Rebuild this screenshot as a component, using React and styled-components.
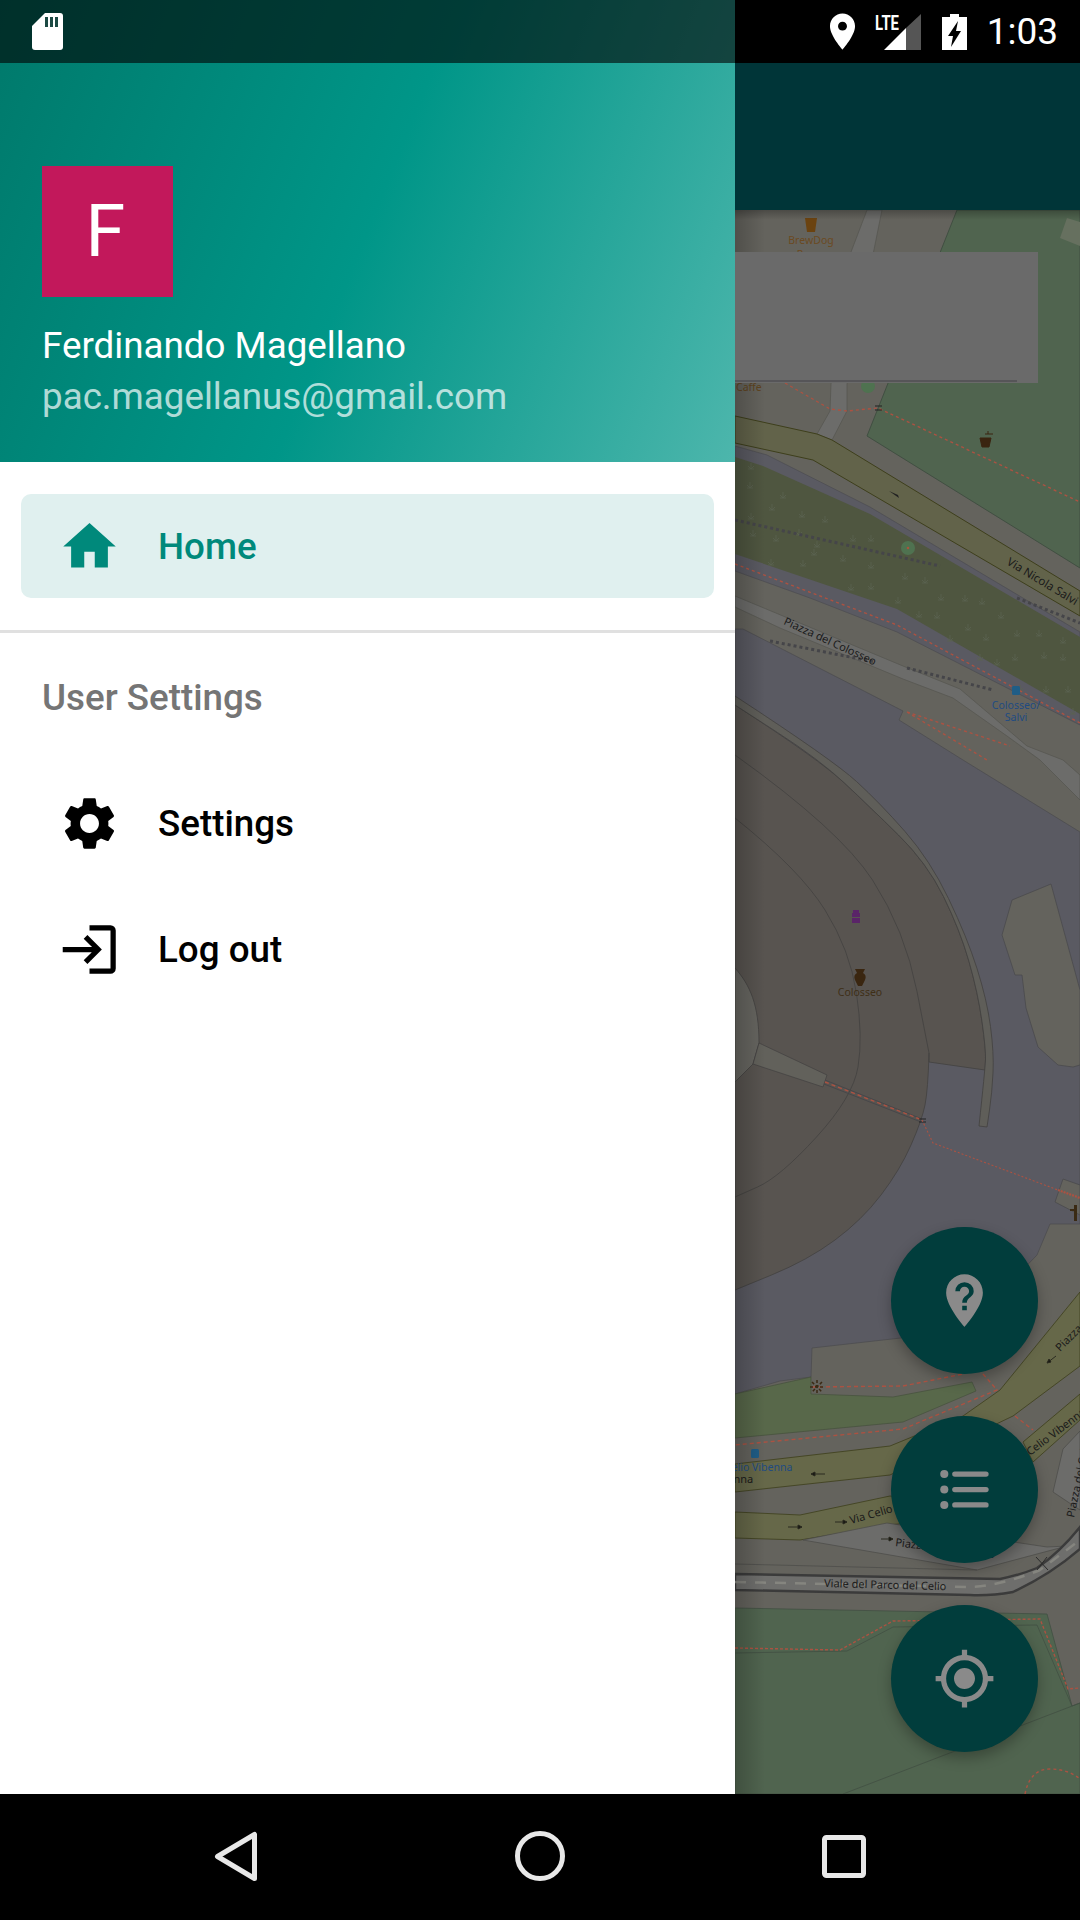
import React from "react";
import styled, { createGlobalStyle } from "styled-components";

const GlobalStyle = createGlobalStyle`
  html, body {
    margin: 0;
    padding: 0;
    background: #000;
    font-family: Roboto, "Liberation Sans", sans-serif;
  }
`;

const Screen = styled.div`
  width: 1080px;
  height: 1920px;
  display: flex;
  flex-direction: column;
  overflow: hidden;
`;

const Body = styled.div`
  flex: 1;
  display: flex;
  min-height: 0;
`;

const Drawer = styled.aside`
  width: 735px;
  flex: none;
  display: flex;
  flex-direction: column;
  background: #fff;
`;

const DrawerTop = styled.div`
  height: 462px;
  display: flex;
  flex-direction: column;
  background: linear-gradient(112deg, #00796b 0%, #009688 50%, #4db6ac 100%);
`;

const DrawerStatus = styled.div`
  height: 63px;
  flex: none;
  padding: 13px 0 0 32px;
  box-sizing: border-box;
  background: rgba(0, 0, 0, 0.6);
`;

const Account = styled.div`
  flex: 1;
  display: flex;
  flex-direction: column;
  padding: 103px 0 0 42px;
`;

const Avatar = styled.div`
  width: 131px;
  height: 131px;
  padding-right: 4px;
  box-sizing: border-box;
  display: flex;
  align-items: center;
  justify-content: center;
  background: #c2185b;
  color: #fff;
  font-size: 72px;
  line-height: 1;
`;

const AccountName = styled.div`
  margin-top: 23px;
  color: #fff;
  font-size: 36.75px;
  line-height: 51px;
`;

const AccountMail = styled.div`
  color: rgba(255, 255, 255, 0.7);
  font-size: 36.75px;
  line-height: 51px;
`;

const Menu = styled.nav`
  flex: 1;
  display: flex;
  flex-direction: column;
  padding-top: 32px;
`;

const MenuRow = styled.div`
  height: ${(p) => (p.$active ? "104px" : "126px")};
  margin: ${(p) => (p.$active ? "0 21px" : "0")};
  padding-left: ${(p) => (p.$active ? "37px" : "58px")};
  box-sizing: border-box;
  display: flex;
  align-items: center;
  gap: 37px;
  border-radius: 10px;
  background: ${(p) => (p.$active ? "#e0f0ef" : "transparent")};
  color: ${(p) => (p.$active ? "#00897b" : "#000")};
  font-size: 36.75px;
  font-weight: 500;
`;

const Divider = styled.div`
  height: 3px;
  margin-top: 32px;
  background: #e0e0e0;
`;

const SectionTitle = styled.div`
  height: 127px;
  padding: 2px 0 0 42px;
  box-sizing: border-box;
  display: flex;
  align-items: center;
  color: #757575;
  font-size: 36.75px;
  font-weight: 500;
`;

const Side = styled.div`
  flex: 1;
  display: flex;
  flex-direction: column;
  min-width: 0;
`;

const SideStatus = styled.div`
  height: 63px;
  flex: none;
  display: flex;
  align-items: center;
  justify-content: flex-end;
  gap: 11px;
  padding-right: 22px;
  background: #000;
  color: #fff;
`;

const StatusBattery = styled.svg`
  margin-left: 10px;
`;

const StatusTime = styled.span`
  margin-left: 9px;
  font-size: 37px;
  line-height: 1;
`;

const Toolbar = styled.div`
  height: 147px;
  flex: none;
  background: #003538;
`;

const MapArea = styled.div`
  flex: 1;
  position: relative;
  overflow: hidden;
  background: #64635d;

  /* drawer and toolbar shadows */
  &::before {
    content: "";
    position: absolute;
    inset: 0 auto 0 0;
    width: 30px;
    background: linear-gradient(90deg, rgba(0, 0, 0, 0.2), rgba(0, 0, 0, 0));
  }
  &::after {
    content: "";
    position: absolute;
    inset: 0 0 auto 0;
    height: 10px;
    background: linear-gradient(180deg, rgba(0, 0, 0, 0.25), rgba(0, 0, 0, 0));
  }
`;

const MapSvg = styled.svg`
  display: block;
  width: 345px;
  height: 1584px;
`;

const MapLabel = styled.text`
  font-family: "Noto Sans", "DejaVu Sans", sans-serif;
  font-size: ${(p) => p.$size || 11}px;
  fill: ${(p) => p.$color || "#1a1a1a"};
`;

const SearchCard = styled.div`
  position: absolute;
  top: 42px;
  left: 0;
  width: 303px;
  height: 131px;
  background: #6a6a6a;
`;

const CardLine = styled.div`
  position: absolute;
  left: 0;
  bottom: 1px;
  width: 282px;
  height: 2px;
  background: #565558;
`;

const FabStack = styled.div`
  position: absolute;
  right: 42px;
  bottom: 42px;
  display: flex;
  flex-direction: column;
  gap: 42px;
`;

const Fab = styled.div`
  width: 147px;
  height: 147px;
  display: flex;
  align-items: center;
  justify-content: center;
  border-radius: 50%;
  background: #013d3c;
  color: #8a8a8a;
  box-shadow: 0 6px 14px rgba(0, 0, 0, 0.28);
`;

const NavBar = styled.div`
  height: 126px;
  flex: none;
  background: #000;
`;

const NavSvg = styled.svg`
  display: block;
  width: 1080px;
  height: 126px;
`;

const Icon = ({ d, size = 63 }) => (
  <svg width={size} height={size} viewBox="0 0 24 24" fill="currentColor">
    <path d={d} />
  </svg>
);

const HOME = "M10 20v-6h4v6h5v-8h3L12 3 2 12h3v8z";
const GEAR =
  "M19.14 12.94c.04-.3.06-.61.06-.94 0-.32-.02-.64-.07-.94l2.03-1.58c.18-.14.23-.41.12-.61l-1.92-3.32c-.12-.22-.37-.29-.59-.22l-2.39.96c-.5-.38-1.03-.7-1.62-.94l-.36-2.54c-.04-.24-.24-.41-.48-.41h-3.84c-.24 0-.43.17-.47.41l-.36 2.54c-.59.24-1.13.57-1.62.94l-2.39-.96c-.22-.08-.47 0-.59.22L2.74 8.87c-.12.21-.08.47.12.61l2.03 1.58c-.05.3-.09.63-.09.94s.02.64.07.94l-2.03 1.58c-.18.14-.23.41-.12.61l1.92 3.32c.12.22.37.29.59.22l2.39-.96c.5.38 1.03.7 1.62.94l.36 2.54c.05.24.24.41.48.41h3.84c.24 0 .44-.17.47-.41l.36-2.54c.59-.24 1.13-.56 1.62-.94l2.39.96c.22.08.47 0 .59-.22l1.92-3.32c.12-.22.07-.47-.12-.61l-2.01-1.58zM12 15.6c-1.98 0-3.6-1.62-3.6-3.6s1.62-3.6 3.6-3.6 3.6 1.62 3.6 3.6-1.62 3.6-3.6 3.6z";
const PIN =
  "M12 2C8.13 2 5 5.13 5 9c0 5.25 7 13 7 13s7-7.75 7-13c0-3.87-3.13-7-7-7zm0 9.5c-1.38 0-2.5-1.12-2.5-2.5s1.12-2.5 2.5-2.5 2.5 1.12 2.5 2.5-1.12 2.5-2.5 2.5z";
const PIN_QUESTION =
  "M12,2C8.14,2 5,5.14 5,9C5,14.25 12,22 12,22C12,22 19,14.25 19,9C19,5.14 15.86,2 12,2M12.88,15.75H11.13V14H12.88M12.88,12.88H11.13C11.13,10.04 13.75,10.26 13.75,8.5A1.75,1.75 0 0,0 12,6.75A1.75,1.75 0 0,0 10.25,8.5H8.5A3.5,3.5 0 0,1 12,5A3.5,3.5 0 0,1 15.5,8.5C15.5,10.69 12.88,10.91 12.88,12.88Z";
const MY_LOCATION =
  "M12 8c-2.21 0-4 1.79-4 4s1.79 4 4 4 4-1.79 4-4-1.79-4-4-4zm8.94 3c-.46-4.17-3.77-7.48-7.94-7.94V1h-2v2.06C6.83 3.52 3.52 6.83 3.06 11H1v2h2.06c.46 4.17 3.77 7.48 7.94 7.94V23h2v-2.06c4.17-.46 7.48-3.77 7.94-7.94H23v-2h-2.06zM12 19c-3.87 0-7-3.13-7-7s3.13-7 7-7 7 3.13 7 7-3.13 7-7 7z";

const LogOutIcon = () => (
  <svg width="63" height="63" viewBox="0 0 24 24" fill="none" stroke="currentColor" strokeWidth="2">
    <path d="M12 3.75h8a1 1 0 0 1 1 1v14.5a1 1 0 0 1-1 1h-8" />
    <path d="M1.8 12h13M10.5 7.2l4.8 4.8-4.8 4.8" />
  </svg>
);

const ListIcon = () => (
  <svg width="63" height="63" viewBox="0 0 24 24" fill="currentColor">
    {[6.1, 12, 17.9].map((y) => (
      <g key={y}>
        <circle cx="4.3" cy={y} r="1.55" />
        <rect x="7.3" y={y - 1} width="13.9" height="2" rx="1" />
      </g>
    ))}
  </svg>
);

const SdCard = () => (
  <svg width="31" height="37" viewBox="0 0 31 37">
    <path d="M13 0h15a3 3 0 0 1 3 3v31a3 3 0 0 1-3 3H3a3 3 0 0 1-3-3V13z" fill="#fff" />
    <path d="M13 4h3v10h-3zM18 4h3v10h-3zM23 4h3v10h-3z" fill="#1c4a44" />
  </svg>
);

const SignalIcon = () => (
  <svg width="46" height="36" viewBox="0 0 46 36">
    <path d="M9 36L31 14V36z" fill="#fff" />
    <path d="M31 36V14L46 0V36z" fill="#555" />
    <text
      x="0"
      y="16"
      fontFamily="Roboto, sans-serif"
      fontWeight="700"
      fontSize="20"
      fill="#fff"
      textLength="24"
      lengthAdjust="spacingAndGlyphs"
    >
      LTE
    </text>
  </svg>
);

const BatteryIcon = () => (
  <StatusBattery width="25" height="36" viewBox="0 0 25 36">
    <path d="M8 0h9v3h8v33H0V3h8z" fill="#fff" />
    <path d="M16 7L6 22h5L9 33l10-16h-5z" fill="#000" />
  </StatusBattery>
);

// points read off the map, page coordinates
const poly = (pts) => pts.map((p) => p.join(",")).join(" ");

// smooth line through a list of points, quadratic through the midpoints
const smooth = (pts) => {
  let d = `M${pts[0].join(" ")}`;
  for (let i = 1; i < pts.length - 1; i++) {
    const mx = (pts[i][0] + pts[i + 1][0]) / 2;
    const my = (pts[i][1] + pts[i + 1][1]) / 2;
    d += `Q${pts[i][0]} ${pts[i][1]} ${mx} ${my}`;
  }
  return `${d}L${pts[pts.length - 1].join(" ")}`;
};

const BAND_OUTER = [[735, 696], [833, 760], [880, 803], [930, 860], [967, 937], [987, 1000], [994, 1053], [992, 1093], [987, 1127]];
const BAND_INNER = [[979, 1126], [985, 1070], [986, 1050], [978, 993], [960, 930], [927, 863], [870, 807], [820, 760], [735, 705]];
const COLOSSEO_TOP = [[735, 705], [820, 760], [870, 807], [927, 863], [960, 930], [978, 993], [986, 1050], [985, 1070]];
const COLOSSEO_BOTTOM = [[929, 1053], [928, 1090], [922, 1120], [900, 1170], [862, 1220], [808, 1260], [735, 1290]];

const GRASS = [
  [751, 466], [750, 485], [783, 495], [772, 507], [802, 514], [751, 516], [825, 519],
  [753, 533], [776, 538], [799, 532], [817, 544], [853, 538], [871, 538], [814, 552],
  [843, 558], [771, 562], [803, 563], [871, 565], [905, 576], [925, 580], [851, 587],
  [871, 586], [898, 600], [941, 597], [965, 598], [982, 601], [919, 614], [937, 615],
  [1001, 615], [968, 627], [1017, 633], [950, 638], [986, 637], [1039, 633],
  [980, 657], [1015, 657], [1044, 655], [997, 662], [1063, 657], [1020, 688],
  [1046, 689], [1068, 689], [1073, 711], [1063, 640],
];

const RED = "#ab5242";

const MapDrawing = () => (
  <MapSvg viewBox="735 210 345 1584">
    {/* top block */}
    <polygon points={poly([[957, 210], [1080, 210], [1080, 568], [867, 436]])} fill="#50644f" stroke="#414f42" />
    <polygon points={poly([[1067, 218], [1080, 222], [1080, 246], [1060, 238]])} fill="#66705f" />
    <polygon
      points={poly([[867, 210], [851, 252], [831, 384], [830, 411], [817, 434], [832, 440], [847, 411], [847, 384], [882, 210]])}
      fill="#6c6c6a"
      stroke="#55554f"
      strokeWidth="0.7"
    />
    <polygon
      points={poly([[735, 416], [817, 434], [832, 440], [1080, 591], [1080, 616], [813, 460], [735, 443]])}
      fill="#62634a"
      stroke="#3e3f1c"
    />

    {/* paved strip and grass */}
    <polygon
      points={poly([[735, 446], [767, 455], [870, 507], [1080, 632], [1080, 725], [897, 632], [810, 598], [735, 571]])}
      fill="#5a5a62"
      stroke="#4c4c50"
      strokeWidth="0.7"
    />
    <polygon
      points={poly([[735, 457], [763, 466], [870, 514], [1080, 637], [1080, 714], [897, 609], [735, 554]])}
      fill="#4f5640"
    />
    {GRASS.map(([x, y]) => (
      <path
        key={`${x}-${y}`}
        d={`M${x} ${y + 3}v-6M${x - 3} ${y}l3 3 3-3M${x - 3} ${y + 3}h6`}
        stroke="#5a6250"
        strokeWidth="0.8"
        fill="none"
      />
    ))}
    <path d="M735 520L940 566" stroke="#454549" strokeWidth="3" strokeDasharray="3 3" fill="none" />
    <path d="M1017 598L1080 623" stroke="#454549" strokeWidth="3" strokeDasharray="3 3" fill="none" />
    <circle cx="908" cy="548" r="7" fill="#4f7250" />
    <circle cx="908" cy="548" r="1.3" fill="#a8553c" />
    <circle cx="868" cy="386" r="7" fill="#4f7250" />

    {/* big plaza */}
    <polygon
      points={poly([[743, 629], [903, 711], [899, 720], [963, 760], [1080, 832], [1080, 1224], [1050, 1224], [1037, 1255], [963, 1331], [812, 1348], [811, 1377], [780, 1381], [735, 1394], [735, 629]])}
      fill="#5a5a62"
      stroke="#4b4b4d"
      strokeWidth="0.7"
    />
    <polygon
      points={poly([[735, 596], [783, 616], [903, 666], [960, 689], [1027, 746], [1063, 760], [1080, 775], [1080, 800], [1050, 770], [1040, 760], [1007, 736], [953, 698], [903, 679], [780, 628], [735, 607]])}
      fill="#6c6c6a"
      stroke="#55554f"
      strokeWidth="0.7"
    />
    <path d="M735 564L897 625L1080 723" stroke={RED} strokeWidth="1.4" strokeDasharray="3 3" fill="none" />
    <path d="M907 712L1010 746M907 712L987 760" stroke={RED} strokeWidth="1.4" strokeDasharray="3 3" fill="none" />
    <path d="M770 641L875 662" stroke="#454549" strokeWidth="3" strokeDasharray="3 3" fill="none" />
    <path d="M907 668L993 690" stroke="#454549" strokeWidth="3" strokeDasharray="3 3" fill="none" />
    <path d="M785 383L830 409L847 411L878 408L1080 502" stroke={RED} strokeWidth="1.4" strokeDasharray="3 3" fill="none" />
    <path d="M875 406h7M875 410h7" stroke="#222" strokeWidth="1" />

    {/* colosseo */}
    <path
      d={`${smooth(COLOSSEO_TOP)}L929 1062L929 1053${smooth(COLOSSEO_BOTTOM).replace("M929 1053", "")}Z`}
      fill="#585450"
      stroke="#424140"
      strokeWidth="0.8"
    />
    <path
      d={`${smooth(BAND_OUTER)}L${smooth(BAND_INNER).slice(1)}Z`}
      fill="#5f5e59"
      stroke="#424140"
      strokeWidth="0.8"
    />
    <path d={smooth([[735, 755], [840, 830], [905, 930], [929, 1053]])} stroke="#424140" fill="none" strokeWidth="0.8" />
    <path d={smooth([[735, 818], [800, 870], [850, 950], [863, 1037], [853, 1097], [780, 1177], [735, 1197]])} stroke="#424140" fill="none" strokeWidth="0.8" />
    <path d="M735 968C750 985 759 1005 759 1043L753 1064L735 1082z" fill="#666560" stroke="#424140" strokeWidth="0.8" />
    <polygon points={poly([[759, 1043], [827, 1075], [823, 1087], [753, 1064]])} fill="#62615b" stroke="#424140" strokeWidth="0.7" />
    <path d="M825 1080L922 1119M824 1084L921 1122" stroke="#47474a" strokeWidth="1" fill="none" />
    <path d="M825 1082L922 1120" stroke={RED} strokeWidth="1.4" strokeDasharray="4 3" fill="none" />
    <path d="M919 1119h7M919 1122h7" stroke="#222" strokeWidth="1" />
    <path d="M922 1120L933 1143L1058 1190" stroke={RED} strokeWidth="1.1" strokeDasharray="2 2" fill="none" />

    {/* island and small blocks */}
    <polygon
      points={poly([[1012, 900], [1051, 884], [1080, 990], [1080, 1065], [1073, 1067], [1058, 1065], [1038, 1047], [1026, 1008], [1022, 975], [1015, 975], [1002, 935]])}
      fill="#64635d"
      stroke="#48484a"
      strokeWidth="0.7"
    />
    <polygon points={poly([[1063, 1179], [1080, 1185], [1080, 1215], [1055, 1202]])} fill="#64635d" stroke="#48484a" strokeWidth="0.7" />
    <path d="M1058 1190L1080 1198" stroke={RED} strokeWidth="2.2" strokeDasharray="2 1" fill="none" />
    <path d="M1074 1205h3v16h-3zM1070 1209h4v2h-4z" fill="#3a2a14" />

    {/* lower green strip */}
    <polygon
      points={poly([[735, 1394], [811, 1377], [811, 1394], [893, 1397], [972, 1382], [976, 1391], [903, 1422], [735, 1438]])}
      fill="#58684a"
      stroke="#45503c"
      strokeWidth="0.7"
    />
    <path d="M812 1387L903 1386L963 1374M983 1374L997 1390L903 1429L735 1445" stroke={RED} strokeWidth="1.4" strokeDasharray="4 3" fill="none" />
    <path d="M817 1380v14M810 1387h14M812 1382l10 10M822 1382l-10 10" stroke="#3a2a14" strokeWidth="1.5" strokeDasharray="3 2" />

    {/* roads */}
    <polygon
      points={poly([[735, 1464], [890, 1446], [963, 1416], [1000, 1390], [1080, 1292], [1080, 1366], [1013, 1416], [890, 1475], [735, 1492]])}
      fill="#666849"
      stroke="#3e3f1c"
      strokeWidth="0.8"
    />
    <polygon points={poly([[1023, 1442], [1080, 1394], [1080, 1420], [1033, 1462]])} fill="#666849" stroke="#3e3f1c" strokeWidth="0.8" />
    <path d="M1015 1416L1033 1430" stroke={RED} strokeWidth="1.4" strokeDasharray="4 3" />
    <polygon
      points={poly([[735, 1512], [800, 1515], [890, 1496], [1000, 1512], [890, 1525], [800, 1540], [735, 1538]])}
      fill="#666849"
      stroke="#3e3f1c"
      strokeWidth="0.8"
    />
    <polygon points={poly([[803, 1540], [887, 1523], [1047, 1547], [1067, 1546], [977, 1570]])} fill="#6c6c6a" stroke="#4a4a47" strokeWidth="0.7" />
    <polygon points={poly([[1053, 1492], [1063, 1449], [1080, 1431], [1080, 1510]])} fill="#6c6c6a" stroke="#4a4a47" strokeWidth="0.7" />
    <path d="M735 1564L977 1570" stroke="#4a4a47" strokeWidth="0.7" />
    <path
      d="M735 1574L1000 1579Q1020 1575 1037 1568Q1060 1552 1080 1527V1549Q1050 1575 1013 1592Q990 1596 970 1595L735 1590z"
      fill="#6e6e6c"
      stroke="#3b3b3b"
      strokeWidth="2.4"
    />
    <path d="M735 1582L970 1587Q1000 1586 1040 1570L1080 1540" stroke="#85857f" strokeWidth="2.5" strokeDasharray="11 9" fill="none" />
    <path d="M1036 1557l12 13M1037 1570l10-13" stroke="#2b2b2b" strokeWidth="1" />

    {/* bottom park */}
    <polygon points={poly([[735, 1608], [1047, 1614], [1072, 1706], [1080, 1703], [1080, 1794], [735, 1794]])} fill="#50644f" stroke="#414f42" strokeWidth="0.8" />
    <path d="M735 1653L847 1651L893 1627L1037 1625L1072 1706M1080 1703L843 1794" stroke="#414f42" strokeWidth="0.8" fill="none" />
    <path d="M735 1648L840 1650L893 1621L1040 1619L1068 1689L1080 1688" stroke={RED} strokeWidth="1.4" strokeDasharray="3 2" fill="none" />
    <path d="M1025 1794Q1030 1769 1050 1769Q1068 1769 1080 1779" stroke={RED} strokeWidth="1.4" strokeDasharray="3 3" fill="none" />

    {/* map icons */}
    <path d="M805 218h12l-2 14h-8z" fill="#6b4310" />
    <path d="M980 438h11l-2 9h-7zM985 434h8M988 431v3" fill="#3a2410" stroke="#3a2410" strokeWidth="1" />
    <path d="M889 491l9 4 1 3-10-7z" fill="#222" />
    <path d="M853 910h6v3h-6zM852 913h8v4h-8zM852 918h8v5h-8z" fill="#5a2468" />
    <path d="M855 969h10l-2 4q4 2 2 7l-3 6h-4l-3-6q-2-5 2-7z" fill="#3a2610" />
    <rect x="1012" y="686" width="8" height="9" rx="1.5" fill="#1f5d86" />
    <rect x="751" y="1449" width="8" height="9" rx="1.5" fill="#1f5d86" />
    <path d="M811 1474h14M811 1474l4-2v4z" stroke="#2b2b20" strokeWidth="1" />
    <path d="M788 1527h14M802 1527l-4-2v4z" stroke="#2b2b20" strokeWidth="1" />
    <path d="M835 1522h12M847 1522l-4-2v4z" stroke="#2b2b20" strokeWidth="1" />
    <path d="M881 1539h12M893 1539l-4-2v4z" stroke="#2b2b20" strokeWidth="1" />
    <path d="M1047 1363l9-7M1047 1363l4-1-2-3z" stroke="#2b2b20" strokeWidth="1" />

    {/* map labels */}
    <MapLabel x="811" y="244" textAnchor="middle" $size={10.5} $color="#6b4a22">BrewDog</MapLabel>
    <MapLabel x="811" y="258" textAnchor="middle" $size={10.5} $color="#6b4a22">Roma</MapLabel>
    <MapLabel x="736" y="391" $size={10.5} $color="#5f4320">Caffe</MapLabel>
    <MapLabel transform="translate(1006 564) rotate(31)" $size={11.5}>Via Nicola Salvi</MapLabel>
    <MapLabel transform="translate(783 624) rotate(24.5)">Piazza del Colosseo</MapLabel>
    <MapLabel x="1016" y="709" textAnchor="middle" $size={10.5} $color="#1f4b82">Colosseo/</MapLabel>
    <MapLabel x="1016" y="721" textAnchor="middle" $size={10.5} $color="#1f4b82">Salvi</MapLabel>
    <MapLabel x="860" y="996" textAnchor="middle" $size={10.5} $color="#3f2f17">Colosseo</MapLabel>
    <MapLabel x="725" y="1471" $size={10.5} $color="#1f4b82">Celio Vibenna</MapLabel>
    <MapLabel x="711" y="1483">Vibenna</MapLabel>
    <MapLabel transform="translate(851 1524) rotate(-16)">Via Celio</MapLabel>
    <MapLabel transform="translate(895 1546) rotate(7)">Piazza del Colosseo</MapLabel>
    <MapLabel transform="translate(1030 1456) rotate(-37)">Celio Vibenna</MapLabel>
    <MapLabel transform="translate(1060 1352) rotate(-45)">Piazza</MapLabel>
    <MapLabel transform="translate(1074 1518) rotate(-78)">Piazza del Colosseo</MapLabel>
    <MapLabel transform="translate(824 1587) rotate(1.5)">Viale del Parco del Celio</MapLabel>
  </MapSvg>
);

export default function App() {
  return (
    <>
      <GlobalStyle />
      <Screen>
        <Body>
          <Drawer>
            <DrawerTop>
              <DrawerStatus>
                <SdCard />
              </DrawerStatus>
              <Account>
                <Avatar>F</Avatar>
                <AccountName>Ferdinando Magellano</AccountName>
                <AccountMail>pac.magellanus@gmail.com</AccountMail>
              </Account>
            </DrawerTop>
            <Menu>
              <MenuRow $active>
                <Icon d={HOME} />
                Home
              </MenuRow>
              <Divider />
              <SectionTitle>User Settings</SectionTitle>
              <MenuRow>
                <Icon d={GEAR} />
                Settings
              </MenuRow>
              <MenuRow>
                <LogOutIcon />
                Log out
              </MenuRow>
            </Menu>
          </Drawer>
          <Side>
            <SideStatus>
              <Icon d={PIN} size={43} />
              <SignalIcon />
              <BatteryIcon />
              <StatusTime>1:03</StatusTime>
            </SideStatus>
            <Toolbar />
            <MapArea>
              <MapDrawing />
              <SearchCard>
                <CardLine />
              </SearchCard>
              <FabStack>
                <Fab>
                  <Icon d={PIN_QUESTION} />
                </Fab>
                <Fab>
                  <ListIcon />
                </Fab>
                <Fab>
                  <Icon d={MY_LOCATION} />
                </Fab>
              </FabStack>
            </MapArea>
          </Side>
        </Body>
        <NavBar>
          <NavSvg viewBox="0 0 1080 126" fill="none" stroke="#e8e8e8" strokeWidth="5" strokeLinejoin="round">
            <path d="M254.5 40.5V84.5L217.5 62.5z" />
            <circle cx="540" cy="62" r="22.5" />
            <rect x="824.5" y="43.5" width="39" height="38" rx="2" />
          </NavSvg>
        </NavBar>
      </Screen>
    </>
  );
}
